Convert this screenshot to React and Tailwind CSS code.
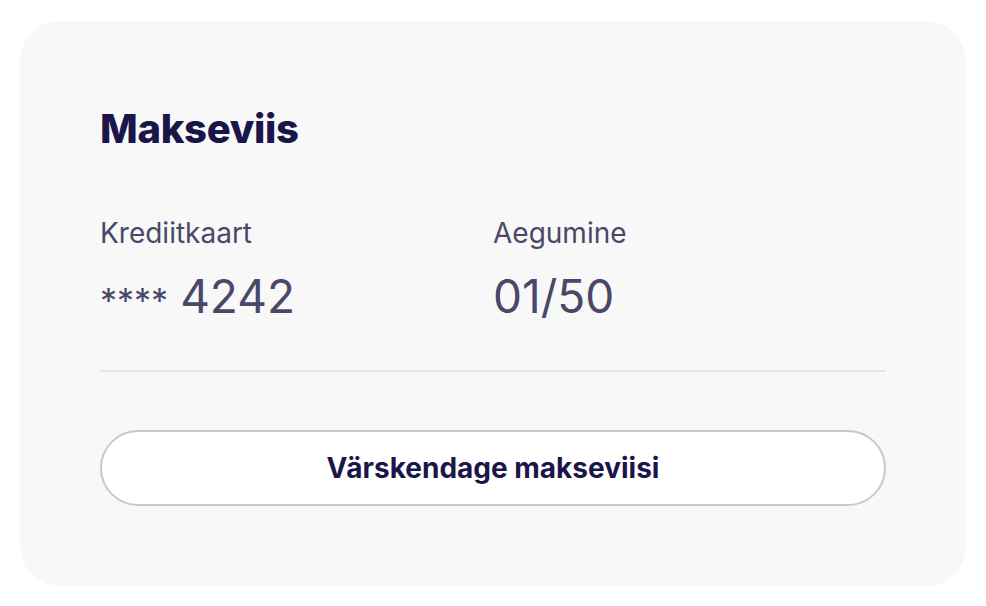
export default function App() {
  return (
    <div className="min-h-screen bg-white p-5 pt-[21px] font-['Inter',sans-serif]">
      <div className="bg-[#f8f8f8] rounded-[40px] px-20 pt-[88px] pb-20 h-[565px]">
        <h1 className="text-[40px] leading-none font-extrabold tracking-[-0.3px] text-[#1b1649]">
          Makseviis
        </h1>

        <div className="grid grid-cols-2 mt-[70px]">
          <div>
            <div className="text-[28px] leading-none text-[#4a4868]">Krediitkaart</div>
            <div className="mt-[26px] text-[#4a4868] leading-none flex items-baseline">
              <span className="text-[34px] mr-3">****</span>
              <span className="text-[46px]">4242</span>
            </div>
          </div>
          <div>
            <div className="text-[28px] leading-none text-[#4a4868]">Aegumine</div>
            <div className="mt-[26px] text-[46px] leading-none text-[#4a4868]">01/50</div>
          </div>
        </div>

        <div className="h-0.5 bg-[#e4e7ee] mt-[51px]" />

        <button className="mt-[58px] w-full h-[76px] rounded-full border-2 border-[#c9c9cd] bg-white text-[28px] font-bold text-[#1b1649]">
          Värskendage makseviisi
        </button>
      </div>
    </div>
  );
}
